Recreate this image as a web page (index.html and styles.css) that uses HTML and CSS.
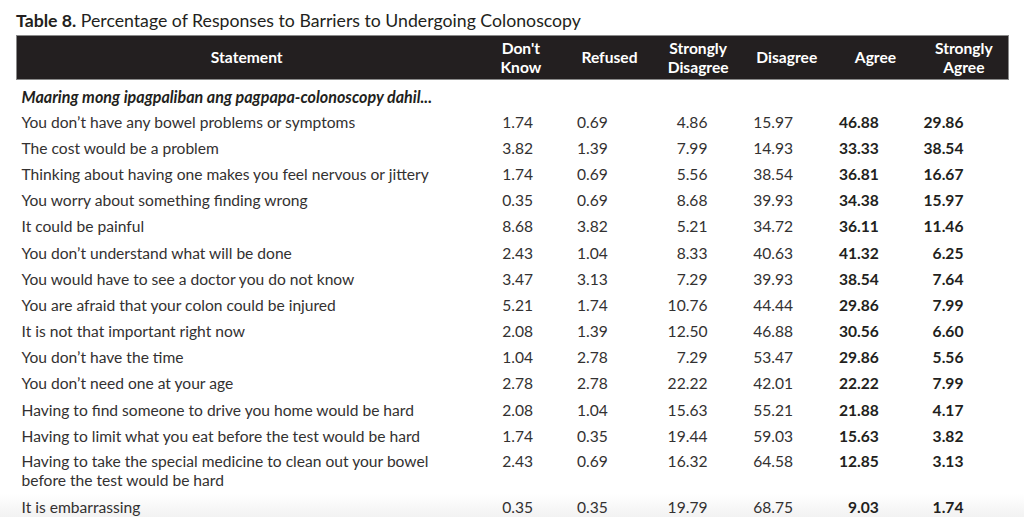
FILE: index.html
```html
<!DOCTYPE html>
<html lang="en">
<head>
<meta charset="utf-8">
<title>Table 8</title>
<link rel="stylesheet" href="styles.css">
</head>
<body>
<div class="page">
  <h1 class="caption"><b>Table 8.</b> Percentage of Responses to Barriers to Undergoing Colonoscopy</h1>
  <table class="data">
    <colgroup>
      <col class="c-stmt">
      <col class="c-num"><col class="c-num"><col class="c-num"><col class="c-num"><col class="c-num"><col class="c-num">
    </colgroup>
    <thead>
      <tr>
        <th>Statement</th>
        <th>Don't<br>Know</th>
        <th>Refused</th>
        <th>Strongly<br>Disagree</th>
        <th>Disagree</th>
        <th>Agree</th>
        <th>Strongly<br>Agree</th>
      </tr>
    </thead>
    <tbody>
      <tr class="section"><td colspan="7">Maaring mong ipagpaliban ang pagpapa-colonoscopy dahil...</td></tr>
      <tr><td>You don’t have any bowel problems or symptoms</td><td class="n1">1.74</td><td class="n2">0.69</td><td class="n3">4.86</td><td class="n4">15.97</td><td class="n5">46.88</td><td class="n6">29.86</td></tr>
      <tr><td>The cost would be a problem</td><td class="n1">3.82</td><td class="n2">1.39</td><td class="n3">7.99</td><td class="n4">14.93</td><td class="n5">33.33</td><td class="n6">38.54</td></tr>
      <tr><td>Thinking about having one makes you feel nervous or jittery</td><td class="n1">1.74</td><td class="n2">0.69</td><td class="n3">5.56</td><td class="n4">38.54</td><td class="n5">36.81</td><td class="n6">16.67</td></tr>
      <tr><td>You worry about something finding wrong</td><td class="n1">0.35</td><td class="n2">0.69</td><td class="n3">8.68</td><td class="n4">39.93</td><td class="n5">34.38</td><td class="n6">15.97</td></tr>
      <tr><td>It could be painful</td><td class="n1">8.68</td><td class="n2">3.82</td><td class="n3">5.21</td><td class="n4">34.72</td><td class="n5">36.11</td><td class="n6">11.46</td></tr>
      <tr><td>You don’t understand what will be done</td><td class="n1">2.43</td><td class="n2">1.04</td><td class="n3">8.33</td><td class="n4">40.63</td><td class="n5">41.32</td><td class="n6">6.25</td></tr>
      <tr><td>You would have to see a doctor you do not know</td><td class="n1">3.47</td><td class="n2">3.13</td><td class="n3">7.29</td><td class="n4">39.93</td><td class="n5">38.54</td><td class="n6">7.64</td></tr>
      <tr><td>You are afraid that your colon could be injured</td><td class="n1">5.21</td><td class="n2">1.74</td><td class="n3">10.76</td><td class="n4">44.44</td><td class="n5">29.86</td><td class="n6">7.99</td></tr>
      <tr><td>It is not that important right now</td><td class="n1">2.08</td><td class="n2">1.39</td><td class="n3">12.50</td><td class="n4">46.88</td><td class="n5">30.56</td><td class="n6">6.60</td></tr>
      <tr><td>You don’t have the time</td><td class="n1">1.04</td><td class="n2">2.78</td><td class="n3">7.29</td><td class="n4">53.47</td><td class="n5">29.86</td><td class="n6">5.56</td></tr>
      <tr><td>You don’t need one at your age</td><td class="n1">2.78</td><td class="n2">2.78</td><td class="n3">22.22</td><td class="n4">42.01</td><td class="n5">22.22</td><td class="n6">7.99</td></tr>
      <tr><td>Having to find someone to drive you home would be hard</td><td class="n1">2.08</td><td class="n2">1.04</td><td class="n3">15.63</td><td class="n4">55.21</td><td class="n5">21.88</td><td class="n6">4.17</td></tr>
      <tr><td>Having to limit what you eat before the test would be hard</td><td class="n1">1.74</td><td class="n2">0.35</td><td class="n3">19.44</td><td class="n4">59.03</td><td class="n5">15.63</td><td class="n6">3.82</td></tr>
      <tr class="tall"><td>Having to take the special medicine to clean out your bowel<br>before the test would be hard</td><td class="n1">2.43</td><td class="n2">0.69</td><td class="n3">16.32</td><td class="n4">64.58</td><td class="n5">12.85</td><td class="n6">3.13</td></tr>
      <tr><td>It is embarrassing</td><td class="n1">0.35</td><td class="n2">0.35</td><td class="n3">19.79</td><td class="n4">68.75</td><td class="n5">9.03</td><td class="n6">1.74</td></tr>
    </tbody>
  </table>
</div>
</body>
</html>
```

FILE: styles.css
```css
html, body {
  margin: 0;
  padding: 0;
  overflow: hidden;
}

body {
  font-family: Lato, "Liberation Sans", sans-serif;
  color: #333131;
  width: 1024px;
  height: 517px;
  background: linear-gradient(to bottom, #ffffff 0px, #ffffff 494px, #f2f2f2 517px);
}

.page {
  padding: 10px 16px 0 16px;
}

.caption {
  margin: 0 0 3px 0;
  font-size: 17.7px;
  font-weight: 400;
  line-height: 22px;
  color: #231f20;
}

.caption b {
  font-weight: 700;
}

.data {
  width: 992px;
  border-collapse: collapse;
  table-layout: fixed;
  font-size: 15.6px;
}

.c-stmt { width: 460px; }
.c-num { width: 88.66px; }

.data thead th {
  background: #231f20;
  color: #ffffff;
  font-weight: 700;
  font-size: 15.6px;
  line-height: 18.5px;
  height: 43px;
  padding: 0;
  text-align: center;
  vertical-align: middle;
  border: 1px solid #8a8a8a;
  border-left: none;
  border-right: none;
}

.data thead th:first-child { border-left: 1px solid #8a8a8a; }
.data thead th:last-child { border-right: 1px solid #8a8a8a; }

.data tbody td {
  height: 26.2px;
  padding: 0;
  line-height: 19px;
  vertical-align: middle;
  white-space: nowrap;
}

.data tbody td:first-child {
  padding-left: 5px;
}

.data tbody tr.section td {
  height: 26px;
  padding-top: 3px;
  font-size: 16.1px;
  font-weight: 700;
  font-style: italic;
  color: #231f20;
}

.data tbody tr.tall td {
  height: 42px;
  vertical-align: top;
  padding-top: 2.5px;
}

.data tbody tr.tall td:first-child { padding-left: 5px; }

.n1, .n2, .n3, .n4, .n5, .n6 { text-align: right; }
.n1 { padding-right: 32px !important; }
.n2 { padding-right: 46px !important; }
.n3 { padding-right: 35px !important; }
.n4 { padding-right: 38px !important; }
.n5 { padding-right: 41px !important; font-weight: 700; color: #231f20; }
.n6 { padding-right: 45px !important; font-weight: 700; color: #231f20; }
```
